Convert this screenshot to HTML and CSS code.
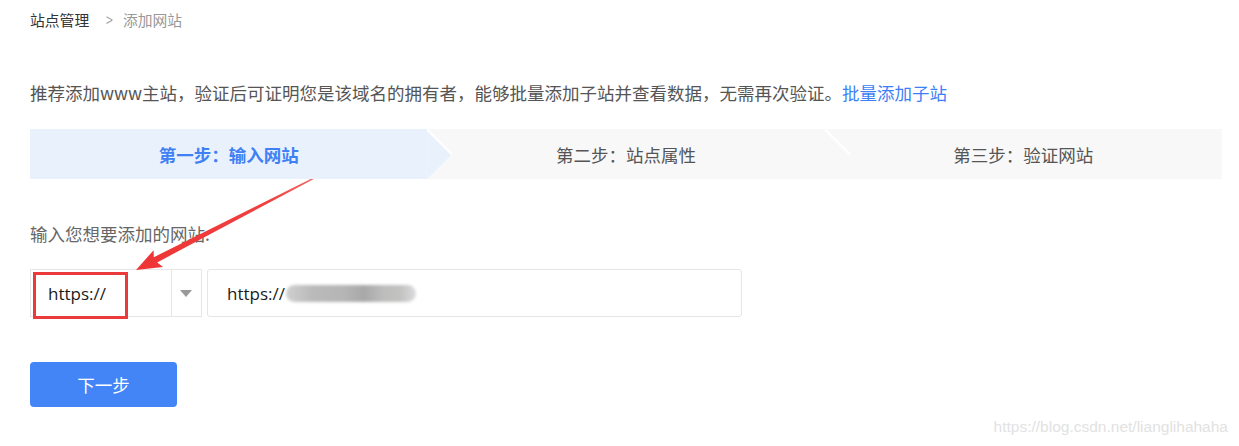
FILE: index.html
```html
<!DOCTYPE html>
<html lang="zh-CN">
<head>
<meta charset="utf-8">
<title>添加网站</title>
<link rel="stylesheet" href="styles.css">
</head>
<body>
<div class="page">
  <div class="breadcrumb">
    <span class="crumb">站点管理</span>
    <span class="sep">&gt;</span>
    <span class="crumb current">添加网站</span>
  </div>
  <p class="desc">推荐添加www主站，验证后可证明您是该域名的拥有者，能够批量添加子站并查看数据，无需再次验证。<a class="link" href="#">批量添加子站</a></p>
  <div class="steps">
    <div class="step active">第一步：输入网站</div>
    <div class="step second">第二步：站点属性</div>
    <div class="step">第三步：验证网站</div>
  </div>
  <div class="label">输入您想要添加的网站:</div>
  <div class="input-row">
    <div class="select">
      <span class="select-value">https://</span>
      <span class="select-caret"></span>
      <span class="mark"></span>
    </div>
    <div class="text-input">
      <span class="input-value">https://</span><span class="blur"></span>
    </div>
  </div>
  <button class="btn">下一步</button>
  <svg class="arrow" width="1239" height="446" viewBox="0 0 1239 446">
    <defs>
      <linearGradient id="ag" x1="322" y1="174" x2="136" y2="270" gradientUnits="userSpaceOnUse">
        <stop offset="0" stop-color="#f56a6a"/>
        <stop offset="0.3" stop-color="#f04040"/>
        <stop offset="1" stop-color="#ee3434"/>
      </linearGradient>
    </defs>
    <polygon fill="url(#ag)" points="136,270 163,267 157.2,262.4 322.3,174.5 321.7,173.5 153.8,257.2 153.6,250.2"/>
  </svg>
  <div class="watermark">https://blog.csdn.net/lianglihahaha</div>
</div>
</body>
</html>
```
FILE: styles.css
```css
* { box-sizing: border-box; }
html, body { margin: 0; padding: 0; background: #fff; }
body {
  font-family: "Noto Sans CJK SC", "Microsoft YaHei", sans-serif;
  color: #333;
}
.page {
  position: relative;
  width: 1239px;
  height: 446px;
  padding: 10px 17px 0 30px;
  overflow: hidden;
}
.breadcrumb {
  display: flex;
  align-items: center;
  height: 20px;
  font-size: 14.8px;
  line-height: 20px;
}
.crumb { color: #333; }
.crumb.current { color: #999; }
.sep {
  color: #999;
  font-family: "Liberation Sans", sans-serif;
  font-size: 15px;
  margin: 0 9px 0 16px;
  transform: scaleX(0.8);
}
.desc {
  margin: 51px 0 0;
  font-size: 17.5px;
  line-height: 24px;
  color: #555;
  white-space: nowrap;
}
.link { color: #3d7ff5; text-decoration: none; }
.steps {
  margin-top: 24px;
  display: flex;
  height: 50px;
  background: #f8f8f8;
}
.step {
  position: relative;
  flex: 1;
  display: flex;
  align-items: center;
  justify-content: center;
  font-size: 17.5px;
  color: #555;
}
.step.active {
  background: #e9f1fd;
  color: #3f80f5;
  font-weight: 700;
  z-index: 1;
}
.step.active::after {
  content: "";
  position: absolute;
  left: 100%;
  top: 0;
  width: 25px;
  height: 50px;
  background: #e9f1fd;
  clip-path: polygon(0 0, 100% 50%, 0 100%);
}
.step.active::before,
.step.second::before {
  content: "";
  position: absolute;
  left: calc(100% + 1px);
  top: 0;
  width: 35px;
  height: 2px;
  background: #fff;
  transform-origin: 0 0;
  transform: rotate(45deg);
  z-index: 2;
}
.label {
  margin-top: 43px;
  font-size: 17.5px;
  line-height: 24px;
  color: #666;
}
.input-row {
  margin-top: 23px;
  display: flex;
  gap: 5px;
  height: 48px;
}
.select {
  position: relative;
  width: 172px;
  height: 48px;
  border: 1px solid #e6e6e6;
  display: flex;
  align-items: center;
}
.select-value {
  flex: 1;
  padding-left: 17px;
  font-family: "Open Sans", sans-serif;
  font-size: 17px;
  color: #1a1a1a;
}
.select-caret {
  width: 30px;
  height: 100%;
  border-left: 1px solid #e6e6e6;
  position: relative;
}
.select-caret::after {
  content: "";
  position: absolute;
  left: 8px;
  top: 20px;
  border-left: 6px solid transparent;
  border-right: 6px solid transparent;
  border-top: 7px solid #999;
}
.mark {
  position: absolute;
  left: 2px;
  top: 2px;
  width: 95px;
  height: 47px;
  border: 3px solid #ea3a3b;
}
.text-input {
  width: 535px;
  height: 48px;
  border: 1px solid #e6e6e6;
  border-radius: 3px;
  display: flex;
  align-items: center;
  padding-left: 19px;
}
.input-value {
  font-family: "Open Sans", sans-serif;
  font-size: 17px;
  color: #1a1a1a;
}
.blur {
  display: inline-block;
  width: 130px;
  height: 17px;
  margin-left: 1px;
  border-radius: 9px;
  background: linear-gradient(90deg, #d0d0d0 0%, #bababa 20%, #b5b5b5 45%, #a8a8a8 60%, #bdbdbd 75%, #c2c2c0 88%, #dcdcdf 100%);
  filter: blur(1.5px);
}
.btn {
  display: block;
  margin-top: 45px;
  width: 147px;
  height: 45px;
  border: 0;
  border-radius: 4px;
  background: #4384f7;
  color: #fff;
  font-family: "Noto Sans CJK SC", sans-serif;
  font-size: 17.5px;
  padding: 0;
}
.arrow {
  position: absolute;
  left: 0;
  top: 0;
  pointer-events: none;
}
.watermark {
  position: absolute;
  right: 11px;
  top: 417px;
  font-family: "Liberation Sans", sans-serif;
  font-size: 15.5px;
  line-height: 20px;
  color: #e2e2e2;
}
```
